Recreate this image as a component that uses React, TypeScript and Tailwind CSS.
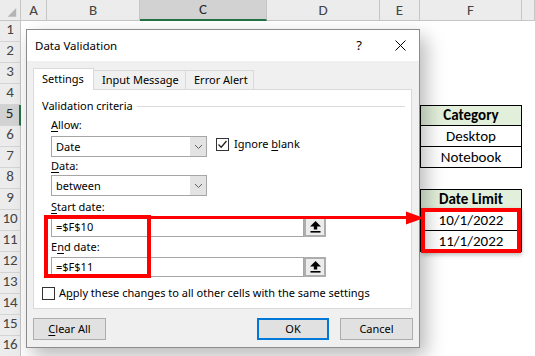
import React from "react";

const cols = ["", "A", "B", "C", "D", "E", "F", ""];
const rows = Array.from({ length: 16 }, (_, i) => i + 1);

const tableCells: Record<number, { text: string; head?: boolean; first?: boolean }> = {
  5: { text: "Category", head: true, first: true },
  6: { text: "Desktop" },
  7: { text: "Notebook" },
  9: { text: "Date Limit", head: true, first: true },
  10: { text: "10/1/2022" },
  11: { text: "11/1/2022" },
};

const Chevron = () => (
  <svg width="9" height="6" viewBox="0 0 9 6">
    <path d="M1 1 L4.5 4.5 L8 1" fill="none" stroke="#606060" strokeWidth="1" />
  </svg>
);

const UploadIcon = () => (
  <svg width="11" height="12" viewBox="0 0 11 12">
    <path d="M5.5 0 L11 5.5 H7.2 V8.5 H3.8 V5.5 H0 Z" fill="#000" />
    <rect x="0.5" y="10" width="10" height="1.6" fill="#000" />
  </svg>
);

const Combo = ({ value }: { value: string }) => (
  <div className="flex h-[21px] w-[156px] border border-[#a6a6a6] bg-white">
    <div className="flex-1 pl-[4px] leading-[19px]">{value}</div>
    <div className="flex w-[16px] items-center justify-center bg-[#e3e3e3]">
      <Chevron />
    </div>
  </div>
);

const RefInput = ({ value }: { value: string }) => (
  <div className="flex h-[20px] w-[275px]">
    <div className="w-[253px] border border-[#a6a6a6] bg-white pl-[4px] leading-[18px]">{value}</div>
    <div className="flex w-[22px] items-center justify-center border-2 border-[#adadad] bg-[#ececec]">
      <UploadIcon />
    </div>
  </div>
);

const Sheet = () => (
  <div className="grid grid-cols-[21px_26px_93px_127px_113px_40px_102px_1fr] grid-rows-[repeat(17,21px)] font-['Calibri','Lato',sans-serif] text-[15px] text-black">
    {cols.map((c, i) => (
      <div
        key={"h" + i}
        className={
          i === 3
            ? "flex items-center justify-center border-r border-b-2 border-r-[#c6c6c6] border-b-[#217346] bg-[#d2d2d2] text-[#262626]"
            : "flex items-center justify-center border-r border-b border-[#c6c6c6] bg-[#ececec] text-[#444]"
        }
      >
        {i === 0 ? (
          <svg width="21" height="20" viewBox="0 0 21 20">
            <path d="M17 8 L17 17 L8 17 Z" fill="#b4b4b4" />
          </svg>
        ) : (
          c
        )}
      </div>
    ))}
    {rows.map((r) => (
      <React.Fragment key={r}>
        <div
          className={
            r === 5
              ? "flex items-end justify-center border-r-2 border-b border-r-[#217346] border-b-[#d4d4d4] bg-[#d2d2d2] pb-[1px] text-[#262626]"
              : "flex items-end justify-center border-r border-b border-r-[#c6c6c6] border-b-[#d4d4d4] bg-[#ececec] pb-[1px] text-[#444]"
          }
        >
          {r}
        </div>
        <div className="bg-white" />
        <div className="bg-white" />
        <div className="bg-white" />
        <div className="bg-white" />
        <div className="bg-white" />
        {tableCells[r] ? (
          <div
            className={
              (tableCells[r].first ? "border-t " : "") +
              (tableCells[r].head ? "bg-[#e2efda] font-bold " : "bg-white ") +
              "flex items-center justify-center border-x border-b border-black"
            }
          >
            {tableCells[r].text}
          </div>
        ) : (
          <div className="bg-white" />
        )}
        <div className="bg-white" />
      </React.Fragment>
    ))}
  </div>
);

const Dialog = () => (
  <div className="absolute left-[26px] top-[29px] flex h-[319px] w-[394px] flex-col border border-[#8c8c8c] bg-[#f0f0f0] font-['Segoe_UI','Noto_Sans',sans-serif] text-[11px] text-black shadow-[6px_8px_18px_rgba(0,0,0,0.28)]">
    <div className="flex h-[31px] items-center bg-white pl-[8px]">
      <span className="flex-1 text-[11.5px]">Data Validation</span>
      <span className="w-[20px] text-center text-[13px]">?</span>
      <span className="ml-[24px] mr-[12px] flex w-[14px] justify-center">
        <svg width="11" height="11" viewBox="0 0 11 11">
          <path d="M0.5 0.5 L10.5 10.5 M10.5 0.5 L0.5 10.5" stroke="#000" strokeWidth="1" />
        </svg>
      </span>
    </div>

    <div className="flex flex-1 flex-col px-[6px] pt-[7px]">
      <div className="relative z-10 flex h-[21px] items-end whitespace-nowrap">
        <div className="-mb-px h-[22px] w-[61px] border border-b-0 border-[#d9d9d9] bg-white pl-[8px] leading-[20px]">
          Settings
        </div>
        <div className="h-[19px] w-[92px] border border-l-0 border-b-0 border-[#d9d9d9] pl-[8px] leading-[18px]">
          Input Message
        </div>
        <div className="h-[19px] w-[68px] border border-l-0 border-b-0 border-[#d9d9d9] pl-[8px] leading-[18px]">
          Error Alert
        </div>
      </div>

      <div className="flex h-[220px] w-[379px] flex-col border border-[#d9d9d9] bg-white pl-[8px] pr-[6px] pt-[8px]">
        <div className="flex h-[16px] items-center gap-[4px]">
          <span>Validation criteria</span>
          <div className="h-px flex-1 bg-[#dcdcdc]" />
        </div>

        <div className="flex flex-col pl-[9px]">
          <div className="mt-[3px] h-[16px] leading-[16px]">
            <u className="underline-offset-2">A</u>llow:
          </div>
          <div className="mt-[3px] flex items-start gap-[9px]">
            <Combo value="Date" />
            <div className="mt-[1px] flex items-center gap-[5px]">
              <div className="flex h-[13px] w-[13px] items-center justify-center border border-[#333] bg-white">
                <svg width="11" height="11" viewBox="0 0 11 11">
                  <path d="M1.5 5.5 L4.2 8.2 L9.5 2" fill="none" stroke="#222" strokeWidth="1.3" />
                </svg>
              </div>
              <span className="leading-[14px]">
                Ignore <u className="underline-offset-2">b</u>lank
              </span>
            </div>
          </div>
          <div className="mt-[1px] h-[16px] leading-[16px]">
            <u className="underline-offset-2">D</u>ata:
          </div>
          <div className="mt-[1px]">
            <Combo value="between" />
          </div>
          <div className="mt-[3px] h-[16px] leading-[16px]">
            <u className="underline-offset-2">S</u>tart date:
          </div>
          <div className="mt-[2px]">
            <RefInput value="=$F$10" />
          </div>
          <div className="mt-[2px] h-[16px] leading-[16px]">
            E<u className="underline-offset-2">n</u>d date:
          </div>
          <div className="mt-[2px]">
            <RefInput value="=$F$11" />
          </div>
        </div>

        <div className="mt-[8px] flex h-[16px] items-center gap-[4px]">
          <div className="h-[13px] w-[13px] border border-[#333] bg-white" />
          <span>
            A<u className="underline-offset-2">p</u>ply these changes to all other cells with the same settings
          </span>
        </div>
      </div>

      <div className="mt-[9px] flex">
        <div className="flex h-[22px] w-[73px] items-center justify-center border border-[#adadad] bg-[#e1e1e1]">
          <span>
            <u className="underline-offset-2">C</u>lear All
          </span>
        </div>
        <div className="flex-1" />
        <div className="flex h-[22px] w-[72px] items-center justify-center border-2 border-[#0078d7] bg-[#e1e1e1]">
          OK
        </div>
        <div className="ml-[11px] flex h-[22px] w-[73px] items-center justify-center border border-[#adadad] bg-[#e1e1e1]">
          Cancel
        </div>
      </div>
    </div>
  </div>
);

export default function App() {
  return (
    <div className="relative h-[356px] w-[535px] overflow-hidden bg-white">
      <Sheet />
      <Dialog />
      <div className="absolute left-[44px] top-[215px] h-[63px] w-[107px] border-4 border-[#ff0000]" />
      <div className="absolute left-[421px] top-[208px] h-[45px] w-[100px] border-4 border-[#ff0000] shadow-[1px_2px_4px_rgba(0,0,0,0.25)]" />
      <svg className="pointer-events-none absolute left-0 top-0" width="535" height="356">
        <line x1="150" y1="217.5" x2="410" y2="217.5" stroke="#ff0000" strokeWidth="3" />
        <path d="M406 211.5 L424 218 L406 224.5 Z" fill="#ff0000" />
      </svg>
    </div>
  );
}
